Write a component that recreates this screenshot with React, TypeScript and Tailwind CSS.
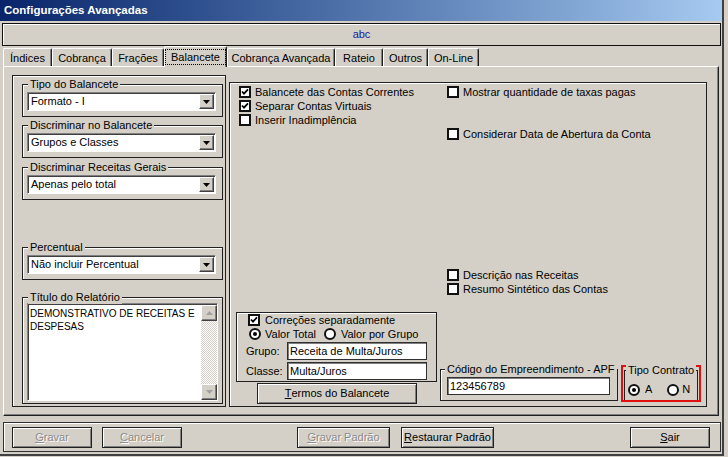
import React from "react";

function Check({ checked }: { checked?: boolean }) {
  return (
    <span className="w-[12px] h-[12px] shrink-0 bg-white border-2 border-[#111111] flex items-center justify-center">
      {checked && (
        <svg width="8" height="8" viewBox="0 0 8 8">
          <path d="M1 3.5 L3 5.6 L7 1.4" fill="none" stroke="#000" strokeWidth="1.8" />
        </svg>
      )}
    </span>
  );
}

function Radio({ checked }: { checked?: boolean }) {
  return (
    <span className="w-[12px] h-[12px] shrink-0 rounded-full bg-white border-2 border-[#111111] flex items-center justify-center">
      {checked && <span className="w-[4px] h-[4px] rounded-full bg-black" />}
    </span>
  );
}

function CheckRow({ checked, label, className = "" }: { checked?: boolean; label: string; className?: string }) {
  return (
    <div className={"h-[14px] flex items-center whitespace-nowrap " + className}>
      <Check checked={checked} />
      <span className="ml-[4px]">{label}</span>
    </div>
  );
}

function Legend({ children, className = "" }: { children: React.ReactNode; className?: string }) {
  return (
    <span className={"absolute top-[-7px] bg-[#d4d0c8] px-[2px] leading-[13px] whitespace-nowrap " + className}>
      {children}
    </span>
  );
}

function Combo({ value }: { value: string }) {
  return (
    <div className="ml-[4px] w-[189px] h-[19px] bg-white border border-t-[#808080] border-l-[#808080] border-b-white border-r-white shadow-[inset_1px_1px_0_#404040] flex items-center">
      <span className="flex-1 pl-[3px] whitespace-nowrap">{value}</span>
      <span className="w-[15px] h-[15px] mr-[1px] bg-[#d4d0c8] border border-t-white border-l-white border-r-[#404040] border-b-[#404040] shadow-[inset_-1px_-1px_0_#808080] flex items-center justify-center">
        <svg width="7" height="4" viewBox="0 0 7 4">
          <path d="M0 0h7L3.5 4z" fill="#000" />
        </svg>
      </span>
    </div>
  );
}

function Edit({ value, className = "" }: { value: string; className?: string }) {
  return (
    <div className={"h-[18px] bg-white border border-[#303030] shadow-[inset_1px_1px_0_#808080] flex items-center pl-[2px] whitespace-nowrap " + className}>
      {value}
    </div>
  );
}

function Btn({ children, className = "", disabled }: { children: React.ReactNode; className?: string; disabled?: boolean }) {
  return (
    <div
      className={
        "h-[21px] border border-[#202020] shadow-[inset_1px_1px_0_#ffffff,inset_-1px_-1px_0_#808080] flex items-center justify-center whitespace-nowrap " +
        (disabled ? "text-[#8a8a8a] [text-shadow:1px_1px_0_#ffffff] " : "") +
        className
      }
    >
      {children}
    </div>
  );
}

function U({ children }: { children: React.ReactNode }) {
  return <span className="underline underline-offset-[1px]">{children}</span>;
}

function ScrollBtn({ up }: { up?: boolean }) {
  return (
    <div className="h-[16px] bg-[#d4d0c8] border border-t-white border-l-white border-r-[#404040] border-b-[#404040] shadow-[inset_-1px_-1px_0_#808080] flex items-center justify-center">
      <svg width="7" height="4" viewBox="0 0 7 4">
        {up ? <path d="M0 4h7L3.5 0z" fill="#a0a0a0" /> : <path d="M0 0h7L3.5 4z" fill="#a0a0a0" />}
      </svg>
    </div>
  );
}

const tabs = [
  { l: "Índices", w: "w-[49px]" },
  { l: "Cobrança", w: "w-[60px]" },
  { l: "Frações", w: "w-[52px]" },
  { l: "Balancete", w: "w-[63px]", a: true },
  { l: "Cobrança Avançada", w: "w-[108px]" },
  { l: "Rateio", w: "w-[48px]" },
  { l: "Outros", w: "w-[45px]" },
  { l: "On-Line", w: "w-[51px]" },
];

const gb = "relative w-[201px] border border-[#202020] shadow-[inset_1px_1px_0_#ffffff]";

export default function App() {
  return (
    <div className="w-[728px] h-[457px] bg-[#d4d0c8] overflow-hidden text-[11px] text-black font-['Liberation_Sans',Arial,sans-serif]">
      <div className="w-[724px] h-[456px] flex flex-col border-r-2 border-b-2 border-[#404040]">
        {/* Title bar */}
        <div className="h-[21px] w-[722px] bg-linear-to-r from-[#0a246a] to-[#a6caf0] flex items-center pl-[4px] text-white font-bold text-[11.5px] whitespace-nowrap">
          Configurações Avançadas
        </div>

        {/* abc bar */}
        <div className="mt-[2px] ml-[2px] w-[719px] h-[23px] border border-[#111111] shadow-[inset_1px_1px_0_#ffffff] flex items-center justify-center text-[#1a1aa0]">
          abc
        </div>

        {/* Tabs */}
        <div className="h-[20px] flex items-end pl-[3px]">
          {tabs.map((t) =>
            t.a ? (
              <div
                key={t.l}
                className={t.w + " h-[21px] -mb-[1px] relative z-10 bg-[#d4d0c8] border-l border-t border-white border-r border-r-[#202020] shadow-[inset_-1px_0_0_#808080] rounded-t-[2px] flex items-center justify-center pb-[1px]"}
              >
                <span className="border border-dotted border-black px-[5px] leading-[14px]">{t.l}</span>
              </div>
            ) : (
              <div
                key={t.l}
                className={t.w + " h-[18px] border-l border-t border-white border-r border-r-[#202020] shadow-[inset_-1px_0_0_#808080] rounded-t-[2px] flex items-center justify-center pt-[2px] whitespace-nowrap"}
              >
                {t.l}
              </div>
            )
          )}
        </div>

        {/* Tab sheet */}
        <div className="ml-[3px] w-[716px] h-[350px] border border-t-white border-l-white border-r-[#202020] border-b-[#202020] shadow-[inset_-1px_-1px_0_#808080] pt-[8px] pl-[8px] flex items-start">
          {/* Left frame */}
          <div className="w-[214px] h-[332px] border border-[#202020] shadow-[inset_1px_1px_0_#ffffff] flex flex-col pl-[9px]">
            <div className={gb + " mt-[8px] h-[33px] pt-[7px]"}>
              <Legend className="left-[5px]">Tipo do Balancete</Legend>
              <Combo value="Formato - I" />
            </div>
            <div className={gb + " mt-[8px] h-[33px] pt-[7px]"}>
              <Legend className="left-[5px]">Discriminar no Balancete</Legend>
              <Combo value="Grupos e Classes" />
            </div>
            <div className={gb + " mt-[9px] h-[33px] pt-[7px]"}>
              <Legend className="left-[5px]">Discriminar Receitas Gerais</Legend>
              <Combo value="Apenas pelo total" />
            </div>
            <div className={gb + " mt-[47px] h-[33px] pt-[7px]"}>
              <Legend className="left-[5px]">Percentual</Legend>
              <Combo value="Não incluir Percentual" />
            </div>
            <div className={gb + " mt-[17px] h-[107px] pt-[5px]"}>
              <Legend className="left-[5px]">Título do Relatório</Legend>
              <div className="ml-[4px] w-[191px] h-[98px] bg-white border border-t-[#808080] border-l-[#808080] border-b-white border-r-white shadow-[inset_1px_1px_0_#404040] flex">
                <div className="flex-1 min-w-0 pl-[2px] pt-[3px] text-[10px] leading-[13px] whitespace-nowrap">
                  DEMONSTRATIVO DE RECEITAS E
                  <br />
                  DESPESAS
                </div>
                <div className="w-[16px] mt-[1px] flex flex-col">
                  <ScrollBtn up />
                  <div className="flex-1 [background-image:repeating-conic-gradient(#ffffff_0_25%,#d4d0c8_0_50%)] [background-size:2px_2px]" />
                  <ScrollBtn />
                </div>
              </div>
            </div>
          </div>

          {/* Middle frame */}
          <div className="ml-[3px] mt-[7px] w-[478px] h-[325px] border border-[#202020] shadow-[inset_1px_1px_0_#ffffff] flex">
            {/* left column */}
            <div className="w-[210px] h-full flex flex-col pb-[2px]">
              <div className="pl-[9px] pt-[2px]">
                <CheckRow checked label="Balancete das Contas Correntes" />
                <CheckRow checked label="Separar Contas Virtuais" />
                <CheckRow label="Inserir Inadimplência" />
              </div>
              <div className={gb + " mt-auto ml-[6px] h-[70px]"}>
                <div className="h-[14px] flex items-center pl-[11px] whitespace-nowrap">
                  <Check checked />
                  <span className="ml-[5px]">Correções separadamente</span>
                </div>
                <div className="h-[14px] flex items-center pl-[12px] whitespace-nowrap">
                  <Radio checked />
                  <span className="ml-[4px]">Valor Total</span>
                  <span className="ml-[8px]">
                    <Radio />
                  </span>
                  <span className="ml-[5px]">Valor por Grupo</span>
                </div>
                <div className="mt-[1px] flex items-center pl-[9px]">
                  <span className="w-[41px]">Grupo:</span>
                  <Edit value="Receita de Multa/Juros" className="w-[140px]" />
                </div>
                <div className="mt-[2px] flex items-center pl-[9px]">
                  <span className="w-[41px]">Classe:</span>
                  <Edit value="Multa/Juros" className="w-[140px]" />
                </div>
              </div>
              <Btn className="mt-[1px] ml-[27px] w-[160px]">
                <U>T</U>ermos do Balancete
              </Btn>
            </div>

            {/* right column */}
            <div className="flex-1 h-full flex flex-col pb-[4px]">
              <CheckRow className="mt-[2px] pl-[7px]" label="Mostrar quantidade de taxas pagas" />
              <CheckRow className="mt-[28px] pl-[7px]" label="Considerar Data de Abertura da Conta" />
              <CheckRow className="mt-[127px] pl-[7px]" label="Descrição nas Receitas" />
              <CheckRow className="pl-[7px]" label="Resumo Sintético das Contas" />
              <div className="mt-auto flex items-start">
                <div className="relative mt-[4px] w-[178px] h-[32px] border border-[#202020] shadow-[inset_1px_1px_0_#ffffff] pt-[7px] pl-[6px]">
                  <Legend className="left-[4px]">Código do Empreendimento - APF</Legend>
                  <Edit value="123456789" className="w-[163px]" />
                </div>
                <div className="ml-[3px] w-[80px] h-[37px] border-2 border-[#e01010] pt-[3px] px-[1px]">
                  <div className="relative h-[30px] border-t border-l border-r border-[#202020] pt-[12px] pl-[3px] flex items-start">
                    <Legend className="left-[1px]">Tipo Contrato</Legend>
                    <div className="h-[13px] flex items-center">
                      <Radio checked />
                      <span className="ml-[5px]">A</span>
                      <span className="ml-[15px]">
                        <Radio />
                      </span>
                      <span className="ml-[3px]">N</span>
                    </div>
                  </div>
                </div>
              </div>
            </div>
          </div>
        </div>

        {/* Bottom bar */}
        <div className="mt-[6px] ml-[3px] w-[718px] h-[30px] border border-[#303030] shadow-[inset_1px_1px_0_#ffffff] pt-[4px] pl-[8px] flex items-start">
          <Btn disabled className="w-[80px]">
            <U>G</U>ravar
          </Btn>
          <Btn disabled className="ml-[10px] w-[80px]">
            <U>C</U>ancelar
          </Btn>
          <Btn disabled className="ml-[115px] w-[93px]">
            <U>G</U>ravar Padrão
          </Btn>
          <Btn className="ml-[11px] w-[93px]">
            <U>R</U>estaurar Padrão
          </Btn>
          <Btn className="ml-[136px] w-[80px]">
            <U>S</U>air
          </Btn>
        </div>
      </div>
    </div>
  );
}
